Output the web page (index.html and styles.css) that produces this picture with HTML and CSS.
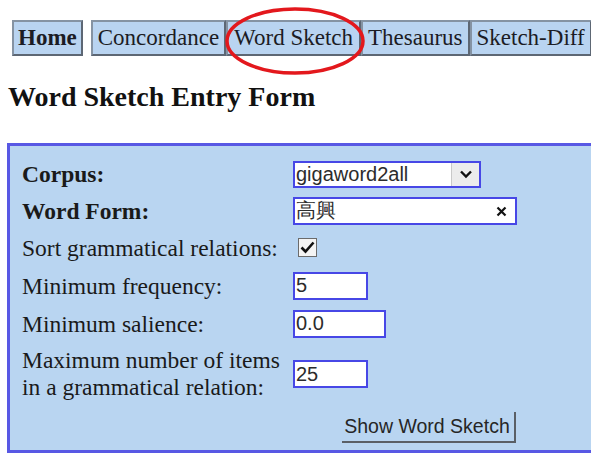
FILE: index.html
```html
<!DOCTYPE html>
<html lang="en">
<head>
<meta charset="utf-8">
<title>Word Sketch Entry Form</title>
<link rel="stylesheet" href="styles.css">
</head>
<body>
<nav class="tabs">
  <a class="tab tab-home" href="#">Home</a>
  <a class="tab" href="#">Concordance</a>
  <a class="tab tab-current" href="#">Word Sketch<svg class="ring" width="144" height="72" viewBox="0 0 144 72" aria-hidden="true"><ellipse cx="71" cy="35" rx="68" ry="32" fill="none" stroke="#e3181d" stroke-width="3.5"/></svg></a>
  <a class="tab" href="#">Thesaurus</a>
  <a class="tab" href="#">Sketch-Diff</a>
</nav>

<h2 class="title">Word Sketch Entry Form</h2>

<form class="entry">
  <div class="fields">
    <label class="lbl lbl-strong" for="corpus">Corpus:</label>
    <div class="select-wrap">
      <select id="corpus" class="select">
        <option>gigaword2all</option>
      </select>
      <span class="select-btn"><svg width="14" height="10" viewBox="0 0 14 10"><path d="M2 2.5 L7 7.5 L12 2.5" fill="none" stroke="#111" stroke-width="2.4"/></svg></span>
    </div>

    <label class="lbl lbl-strong" for="lemma">Word Form:</label>
    <div class="text-wrap">
      <input id="lemma" class="field field-wide" type="text" value="高興">
      <span class="clear"><svg width="11" height="11" viewBox="0 0 11 11"><path d="M1.5 1.5 L9.5 9.5 M9.5 1.5 L1.5 9.5" stroke="#111" stroke-width="2.2"/></svg></span>
    </div>

    <span class="lbl">Sort grammatical relations:</span>
    <span class="check"><svg width="15" height="13" viewBox="0 0 15 13"><path d="M1.5 6.5 L5.5 10.5 L13.5 1.5" fill="none" stroke="#111" stroke-width="2.6"/></svg></span>

    <label class="lbl" for="minfreq">Minimum frequency:</label>
    <div><input id="minfreq" class="field field-short" type="text" value="5"></div>

    <label class="lbl" for="minsal">Minimum salience:</label>
    <div><input id="minsal" class="field field-mid" type="text" value="0.0"></div>

    <label class="lbl lbl-two" for="maxitems">Maximum number of items<br>in a grammatical relation:</label>
    <div><input id="maxitems" class="field field-short" type="text" value="25"></div>

    <span></span>
    <div class="actions"><button class="submit" type="button">Show Word Sketch</button></div>
  </div>
</form>
</body>
</html>
```

FILE: styles.css
```css
html, body {
  margin: 0;
  background: #ffffff;
  overflow: hidden;
}

body {
  font-family: "Liberation Serif", "Times New Roman", serif;
  color: #161616;
}

/* navigation tabs */
.tabs {
  display: flex;
  padding: 20px 0 0 12px;
  white-space: nowrap;
}

.tab {
  display: block;
  flex: 0 0 auto;
  font-size: 23px;
  line-height: 32px;
  padding: 0 5px;
  color: #1c1c24;
  text-decoration: none;
  background: #b9d4f1;
  border: 2px solid #8593a3;
  border-right-color: #5d6774;
  border-bottom-color: #5d6774;
}

.tab-home {
  font-weight: bold;
  padding: 0 4px;
  margin-right: 8px;
}

.tab-current {
  position: relative;
  padding: 0 6px;
}

.ring {
  position: absolute;
  left: -4px;
  top: -16px;
  overflow: visible;
}

/* heading */
.title {
  margin: 25px 0 0 8px;
  font-size: 28px;
  line-height: 32px;
  font-weight: bold;
  color: #111;
}

/* entry form */
.entry {
  margin: 30px 0 0 7px;
  width: 640px;
  background: #b9d5f1;
  border: 3px solid #5858e4;
  padding: 10px 0 7px 12px;
  box-sizing: border-box;
}

.fields {
  display: grid;
  grid-template-columns: 271px auto;
  grid-template-rows: 36px 37px 37px 39px 37px 64px auto;
  align-items: center;
}

.lbl {
  font-size: 23.5px;
  line-height: 28px;
  color: #1a1a1a;
  white-space: nowrap;
}

.lbl-strong {
  font-weight: bold;
}

.lbl-two {
  line-height: 27px;
}

.select-wrap,
.text-wrap {
  position: relative;
  width: max-content;
}

.select,
.field {
  font-family: "Liberation Sans", Arial, sans-serif;
  font-size: 20px;
  color: #2c2c2c;
  background: #fff;
  border: 2px solid #4747e6;
  border-radius: 0;
  padding: 0 0 0 1px;
  margin: 0;
  box-sizing: border-box;
  outline: none;
  display: block;
}

.select {
  appearance: none;
  -webkit-appearance: none;
  width: 188px;
  height: 27px;
  line-height: 23px;
}

.select-btn {
  position: absolute;
  top: 2px;
  right: 2px;
  width: 27px;
  height: 23px;
  background: #ececec;
  border-left: 1px solid #c9c9c9;
  display: flex;
  align-items: center;
  justify-content: center;
}

.field {
  height: 28px;
}

.field-wide {
  width: 224px;
}

.field-short {
  width: 75px;
}

.field-mid {
  width: 93px;
}

.clear {
  position: absolute;
  right: 10px;
  top: 9px;
  display: flex;
}

.check {
  margin-left: 5px;
  width: 19px;
  height: 19px;
  box-sizing: border-box;
  border: 1px solid #6b6b6b;
  background: #f4f4f4;
  display: flex;
  align-items: center;
  justify-content: center;
}

.actions {
  padding: 6px 0 0 49px;
}

.submit {
  display: block;
  font-family: "Liberation Sans", Arial, sans-serif;
  font-size: 19.5px;
  line-height: 29px;
  color: #262626;
  background: #b9d5f1;
  border: none;
  border-right: 2px solid #5a5f66;
  border-bottom: 2px solid #5a5f66;
  height: 31px;
  width: 174px;
  padding: 0 2px 0 0;
  margin: 0;
  white-space: nowrap;
}
```
